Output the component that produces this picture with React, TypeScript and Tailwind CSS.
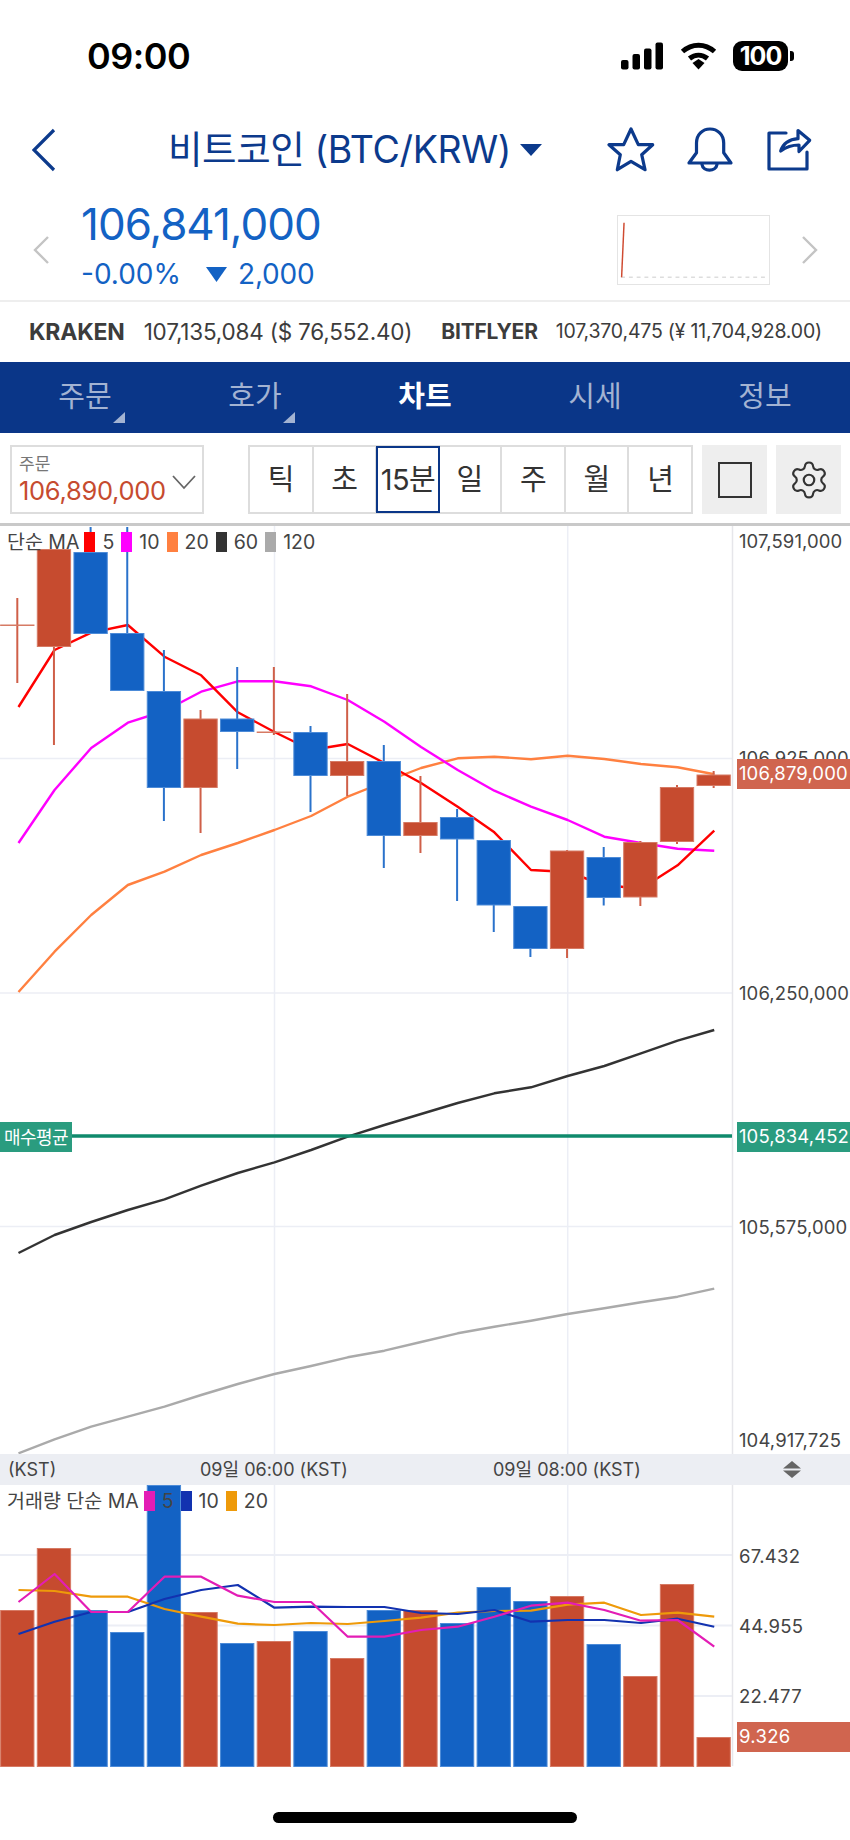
import { Settings } from "lucide-react"

const NAVY = "#0c3a8c"
const UP = "#c64b2f"
const DOWN = "#1362c4"

// Chart data is kept in page pixels: x comes from the candle index, y is read off the picture.
const cx = (i: number) => 17.3 + 36.65 * i
const lx = (i: number) => (i === 0 ? 18.5 : cx(i) + 0.6)
const line = (ys: number[]) => ys.map((y, i) => `${lx(i)},${y}`).join(" ")

type Candle = [top: number, bottom: number, wickTop: number, wickBottom: number, up: boolean]

const CANDLES: Candle[] = [
  [624.5, 625.5, 598, 683, true],
  [549, 647, 549, 745, true],
  [552, 634, 527, 634, false],
  [633, 691, 527, 691, false],
  [691, 788, 650, 821, false],
  [718.5, 788, 710, 833, true],
  [718.5, 732, 667, 769, false],
  [731.5, 732.5, 667, 735, true],
  [732, 776, 726, 812, false],
  [761, 776, 694, 796, true],
  [761, 836, 745, 868, false],
  [822, 836, 776, 853, true],
  [817, 839.5, 809, 901, false],
  [840, 905.5, 840, 932, false],
  [906, 949, 906, 957, false],
  [850.5, 949, 850, 958, true],
  [857, 898, 847, 905.5, false],
  [842, 897.5, 841, 906, true],
  [787, 842, 785, 844, true],
  [774.5, 786, 771, 788, true],
]

const MA5 = [707, 650, 632.7, 625, 656.7, 675.3, 712.3, 732, 750, 744, 763, 783, 806.7, 832.3, 870, 872, 885, 888.7, 865.3, 830.7]
const MA10 = [843, 790, 748, 722.7, 711, 691.7, 681.3, 681.3, 686.3, 700, 721.7, 747, 770, 790.7, 806.7, 820, 836.7, 843, 848.7, 850.7]
const MA20 = [992, 951.7, 915, 885, 871.7, 855, 843, 830, 816, 796.7, 782, 768, 758.3, 756.7, 759.3, 755.7, 759, 764, 767.3, 774.3]
const MA60 = [1253, 1235, 1222, 1210, 1199.3, 1185.7, 1173, 1162.3, 1150, 1136.7, 1125, 1114, 1103, 1093.3, 1087.3, 1076, 1066, 1053.3, 1040.7, 1030]
const MA120 = [1453.3, 1439.3, 1426.7, 1416.7, 1406.7, 1395, 1384, 1374, 1366, 1357.3, 1350.7, 1342, 1333.3, 1326.7, 1320.7, 1314, 1308.3, 1302.3, 1296.7, 1288.7]

const VOLUME: [number, boolean][] = [
  [1610, true], [1548, true], [1610, false], [1632, false], [1485, false],
  [1612, true], [1643, false], [1641, true], [1631, false], [1658, true],
  [1610, false], [1610, true], [1623, false], [1587, false], [1601, false],
  [1596, true], [1644, false], [1676, true], [1584, true], [1737, true],
]

const VOL5 = [1602, 1574, 1612, 1612, 1576.7, 1576.7, 1595.7, 1602, 1602, 1636.7, 1636.7, 1630, 1626.7, 1616.7, 1605.7, 1602.7, 1610, 1620.7, 1620, 1646.7]
const VOL10 = [1634, 1621.7, 1612, 1612, 1599, 1590, 1585, 1607.7, 1606.7, 1607, 1607, 1613, 1614, 1610, 1621.7, 1620, 1620, 1623, 1618.7, 1626.7]
const VOL20 = [1590, 1591, 1596.7, 1596.7, 1609, 1616.7, 1623.7, 1625, 1623, 1624, 1621, 1617.7, 1612.7, 1611, 1610.7, 1604.7, 1602.7, 1615, 1612.7, 1616.7]

const TABS = [
  { label: "주문", corner: true },
  { label: "호가", corner: true },
  { label: "차트", active: true },
  { label: "시세" },
  { label: "정보" },
]

const PERIODS = ["틱", "초", "15분", "일", "주", "월", "년"]

function StatusBar() {
  return (
    <div className="flex h-[120px] items-start">
      <span className="ml-[87px] mt-[33px] text-[36px] font-semibold leading-[46px] tracking-[-0.5px] text-black">
        09:00
      </span>
      <div className="ml-auto mr-[56px] mt-[41px] flex items-center">
        <svg width="42" height="28" viewBox="0 0 42 28" fill="#000">
          <rect x="0" y="18" width="7.5" height="9.5" rx="2" />
          <rect x="11.5" y="12" width="7.5" height="15.5" rx="2" />
          <rect x="23" y="6.5" width="7.5" height="21" rx="2" />
          <rect x="34.5" y="0.5" width="7.5" height="27" rx="2" />
        </svg>
        <svg className="ml-[17px]" width="37" height="28" viewBox="0 0 37 28">
          <g fill="none" stroke="#000" strokeWidth="5">
            <path d="M2.5 9.5C12 1 25 1 34.5 9.5" />
            <path d="M9.5 16.5C15 12 22 12 27.5 16.5" />
          </g>
          <polygon points="12.5,21 18.5,17 24.5,21 18.5,27.5" fill="#000" />
        </svg>
        <div className="ml-[16px] flex h-[30px] w-[55px] items-center justify-center rounded-[9px] bg-black text-[25px] font-bold leading-none tracking-[-1px] text-white">
          100
        </div>
        <div className="ml-[2px] h-[10px] w-[4px] rounded-r-[3px] bg-black" />
      </div>
    </div>
  )
}

function TitleRow() {
  return (
    <div className="flex h-[60px] items-center">
      <svg className="ml-[32px]" width="24" height="44" viewBox="0 0 24 44" fill="none" stroke={NAVY} strokeWidth="3.2">
        <polyline points="22,2 2,22 22,42" />
      </svg>
      <span className="ml-[112px] whitespace-nowrap text-[37.5px] leading-[50px] tracking-[-0.4px] text-[#0c3a8c]">
        비트코인 (BTC/KRW)
      </span>
      <svg className="ml-[9px]" width="22" height="12" viewBox="0 0 22 12" fill={NAVY}>
        <polygon points="0,0 22,0 11,12" />
      </svg>
      <svg className="ml-[65px]" width="48" height="46" viewBox="0 0 48 46" fill="none" stroke={NAVY} strokeWidth="3.2" strokeLinejoin="round">
        <polygon points="24,2 31.3,17.7 45.7,17.7 34.7,27.7 38,42.7 24,34.3 10.3,42.7 13.3,27.7 2,17.7 16.7,17.7" />
      </svg>
      <svg className="ml-[31px]" width="48" height="48" viewBox="-2 -2 48 48" fill="none" stroke={NAVY} strokeWidth="3.2" strokeLinejoin="round" strokeLinecap="round">
        <path d="M1 35L8.5 24.7V15C8.5 6.5 14.5 1 22 1S35.7 6.5 35.7 15V24.7L43 35Z" />
        <path d="M14 36.5C15 44 28 44 29 36.5" />
      </svg>
      <svg className="ml-[32px]" width="46" height="44" viewBox="-2 -4 46 44" fill="none" stroke={NAVY} strokeWidth="3.2" strokeLinecap="round" strokeLinejoin="round">
        <path d="M18 1H1V37H39V20" />
        <path d="M12.7 19C15 12 21 7.5 30 6.7V-1.5L41.7 8.3L31 19.5V13C23 13 18 15 12.7 19Z" />
      </svg>
    </div>
  )
}

function PriceRow() {
  return (
    <div className="flex h-[122px] items-start border-b-[2px] border-[#eeeeee]">
      <svg className="ml-[33px] mt-[56px]" width="16" height="28" viewBox="0 0 16 28" fill="none" stroke="#c4c4c4" strokeWidth="2.4">
        <polyline points="15,1 2,14 15,27" />
      </svg>
      <div className="ml-[32px] mt-[17px] flex flex-col text-[#1362c4]">
        <span className="text-[44px] leading-[54px] tracking-[-1px]">106,841,000</span>
        <div className="mt-[5px] flex items-center text-[28px] leading-[36px]">
          <span className="w-[125px]">-0.00%</span>
          <svg width="21" height="15" viewBox="0 0 21 15" fill={DOWN}>
            <polygon points="0,0 21,0 10.5,15" />
          </svg>
          <span className="ml-[11px] tracking-[-0.2px]">2,000</span>
        </div>
      </div>
      <svg className="ml-auto mt-[35px] border-[1.5px] border-[#e4e4e4]" width="153" height="70" viewBox="0 0 153 70" fill="none">
        <line x1="2" y1="63" x2="150" y2="63" stroke="#dddddd" strokeWidth="1.5" strokeDasharray="4 4" />
        <line x1="5" y1="7" x2="2.5" y2="63" stroke="#cf4a30" strokeWidth="1.5" />
      </svg>
      <svg className="ml-[32px] mr-[32px] mt-[56px]" width="16" height="28" viewBox="0 0 16 28" fill="none" stroke="#c4c4c4" strokeWidth="2.4">
        <polyline points="1,1 14,14 1,27" />
      </svg>
    </div>
  )
}

function ExchangeRow() {
  return (
    <div className="flex h-[60px] items-center whitespace-nowrap text-[#3c3c3c]">
      <span className="ml-[29px] text-[23px] font-bold tracking-[-0.2px]">KRAKEN</span>
      <span className="ml-[19px] text-[22.5px] tracking-[-0.2px]">107,135,084 ($ 76,552.40)</span>
      <span className="ml-[29px] text-[21px] font-bold tracking-[-0.2px]">BITFLYER</span>
      <span className="ml-[18px] text-[19.5px] tracking-[-0.2px]">107,370,475 (¥ 11,704,928.00)</span>
    </div>
  )
}

function TabBar() {
  return (
    <div className="flex h-[71px] bg-[#0a3688]">
      {TABS.map((t) => (
        <div key={t.label} className="relative flex flex-1 items-center justify-center pb-[1px]">
          <span className={`text-[29px] ${t.active ? "font-bold text-white" : "text-[#a3b3d2]"}`}>{t.label}</span>
          {t.corner ? (
            <svg className="absolute bottom-[10px] left-[113px]" width="12" height="11" viewBox="0 0 12 11" fill="#a3b3d2">
              <polygon points="12,0 12,11 0,11" />
            </svg>
          ) : null}
        </div>
      ))}
    </div>
  )
}

function Toolbar() {
  return (
    <div className="flex h-[93px] items-start border-b-[3px] border-[#c9c9c9] pl-[10px] pt-[12px]">
      <div className="flex h-[69px] w-[194px] items-center border-[2.5px] border-[#dddddd] pl-[7px]">
        <div className="flex flex-col">
          <span className="text-[17px] leading-[20px] text-[#777777]">주문</span>
          <span className="mt-[3px] text-[25.5px] leading-[28px] tracking-[-0.3px] text-[#c64b2f]">106,890,000</span>
        </div>
        <svg className="ml-[6px] mt-[5px]" width="24" height="15" viewBox="0 0 24 15" fill="none" stroke="#666666" strokeWidth="1.8">
          <polyline points="1,1 12,13 23,1" />
        </svg>
      </div>
      <div className="ml-[44px] flex h-[69px] w-[445px] border-[2.5px] border-[#dddddd]">
        {PERIODS.map((p, i) => (
          <div
            key={p}
            className={`flex flex-1 items-center justify-center text-[29px] tracking-[-0.5px] text-[#333333] ${
              p === "15분" ? "outline-2 -outline-offset-1 outline-[#0a3688]" : i < 6 ? "border-r-[2px] border-[#dddddd]" : ""
            }`}
          >
            {p}
          </div>
        ))}
      </div>
      <div className="ml-[9px] flex h-[69px] w-[65px] items-center justify-center bg-[#eeeeee]">
        <div className="h-[36px] w-[34px] border-[2px] border-[#333333]" />
      </div>
      <div className="ml-[9px] flex h-[69px] w-[65px] items-center justify-center bg-[#eeeeee]">
        <Settings size={42} strokeWidth={1.25} color="#333333" />
      </div>
    </div>
  )
}

function LegendSwatch({ className, label }: { className: string; label: string }) {
  return (
    <>
      <span className={`h-[20px] w-[11px] ${className}`} />
      <span className="mx-[7px]">{label}</span>
    </>
  )
}

// Bars and candle bodies carry a faint lighter edge in the picture.
function Body({ x, y, height, up }: { x: number; y: number; height: number; up: boolean }) {
  return (
    <rect
      x={x - 16.65}
      y={y + 0.5}
      width="33.3"
      height={Math.max(height - 1, 0.5)}
      fill={up ? UP : DOWN}
      stroke={up ? "#d67a64" : "#4c8bd8"}
      strokeWidth="1"
    />
  )
}

function PriceChart() {
  return (
    <div className="relative h-[928px] overflow-hidden">
      <svg className="block" width="850" height="928" viewBox="0 526 850 928" fill="none">
        <g stroke="#eceef5" strokeWidth="1.5">
          <line x1="0" y1="758.5" x2="732" y2="758.5" />
          <line x1="0" y1="993" x2="732" y2="993" />
          <line x1="0" y1="1226.5" x2="732" y2="1226.5" />
          <line x1="274.5" y1="526" x2="274.5" y2="1454" />
          <line x1="567.7" y1="526" x2="567.7" y2="1454" />
        </g>
        <line x1="732.5" y1="526" x2="732.5" y2="1454" stroke="#e6e6ea" strokeWidth="1.5" />
        <g strokeWidth="2.4" strokeLinejoin="round">
          <polyline points={line(MA120)} stroke="#aaaaaa" />
          <polyline points={line(MA60)} stroke="#333333" />
          <polyline points={line(MA20)} stroke="#ff8040" />
          <polyline points={line(MA10)} stroke="#ff00ff" />
          <polyline points={line(MA5)} stroke="#ff0000" />
        </g>
        <line x1="0" y1="1136" x2="732" y2="1136" stroke="#0f8a6c" strokeWidth="3.4" />
        {CANDLES.map(([top, bottom, wickTop, wickBottom, up], i) => (
          <g key={i}>
            <line x1={cx(i)} y1={wickTop} x2={cx(i)} y2={wickBottom} stroke={up ? "#cf5f48" : "#2a72cb"} strokeWidth="2" />
            <Body x={cx(i)} y={top} height={bottom - top} up={up} />
          </g>
        ))}
      </svg>
      <div className="absolute left-[7px] top-[4px] flex items-center text-[19.5px] leading-[24px] text-[#444444]">
        <span className="mr-[5px]">단순 MA</span>
        <LegendSwatch className="bg-[#ff0000]" label="5" />
        <LegendSwatch className="bg-[#ff00ff]" label="10" />
        <LegendSwatch className="bg-[#ff8040]" label="20" />
        <LegendSwatch className="bg-[#333333]" label="60" />
        <LegendSwatch className="bg-[#aaaaaa]" label="120" />
      </div>
      <div className="absolute left-0 top-[596px] flex h-[30px] w-[72px] items-center justify-center bg-[#2a9c7f] text-[18px] tracking-[-0.6px] text-white">
        매수평균
      </div>
      <div className="absolute left-[739px] top-[3px] text-[18.5px] leading-[24px] tracking-[0.1px] text-[#444444]">107,591,000</div>
      <div className="absolute left-[739px] top-[220px] text-[18.5px] leading-[24px] tracking-[0.1px] text-[#444444]">106,925,000</div>
      <div className="absolute left-[737px] top-[233px] flex h-[30px] w-[113px] items-center bg-[#d0654f] pl-[2px] text-[18.5px] tracking-[0.1px] text-white">106,879,000</div>
      <div className="absolute left-[739px] top-[455px] text-[18.5px] leading-[24px] tracking-[0.1px] text-[#444444]">106,250,000</div>
      <div className="absolute left-[737px] top-[596px] flex h-[30px] w-[113px] items-center bg-[#2a9c7f] pl-[2px] text-[18.5px] tracking-[0.1px] text-white">105,834,452</div>
      <div className="absolute left-[739px] top-[689px] text-[18.5px] leading-[24px] tracking-[0.1px] text-[#444444]">105,575,000</div>
      <div className="absolute left-[739px] top-[902px] text-[18.5px] leading-[24px] tracking-[0.1px] text-[#444444]">104,917,725</div>
    </div>
  )
}

function TimeAxis() {
  return (
    <div className="relative h-[31px] bg-[#eceef3] text-[18px] leading-[31px] text-[#444444]">
      <span className="absolute left-[8px]">(KST)</span>
      <span className="absolute left-[200px]">09일 06:00 (KST)</span>
      <span className="absolute left-[493px]">09일 08:00 (KST)</span>
      <svg className="absolute left-[783px] top-[7px]" width="18" height="17" viewBox="0 0 18 17" fill="#666666">
        <polygon points="9,0 18,7.5 0,7.5" />
        <polygon points="0,9.5 18,9.5 9,17" />
      </svg>
    </div>
  )
}

function VolumeChart() {
  return (
    <div className="relative h-[282px] overflow-hidden">
      <svg className="block" width="850" height="282" viewBox="0 1485 850 282" fill="none">
        <g stroke="#eceef5" strokeWidth="2">
          <line x1="0" y1="1555" x2="732" y2="1555" />
          <line x1="0" y1="1625.5" x2="732" y2="1625.5" />
          <line x1="0" y1="1696" x2="732" y2="1696" />
        </g>
        <g stroke="#eceef5" strokeWidth="1.5">
          <line x1="274.5" y1="1485" x2="274.5" y2="1766" />
          <line x1="567.7" y1="1485" x2="567.7" y2="1766" />
        </g>
        <line x1="732.5" y1="1485" x2="732.5" y2="1766" stroke="#e6e6ea" strokeWidth="1.5" />
        {VOLUME.map(([top, up], i) => (
          <Body key={i} x={cx(i)} y={top} height={1767 - top} up={up} />
        ))}
        <g strokeWidth="2.2" strokeLinejoin="round">
          <polyline points={line(VOL20)} stroke="#ee9a0a" />
          <polyline points={line(VOL10)} stroke="#1232b0" />
          <polyline points={line(VOL5)} stroke="#e31db5" />
        </g>
      </svg>
      <div className="absolute left-[7px] top-[4px] flex items-center text-[19.5px] leading-[24px] text-[#444444]">
        <span className="mr-[5px]">거래량 단순 MA</span>
        <LegendSwatch className="bg-[#e31db5]" label="5" />
        <LegendSwatch className="bg-[#1232b0]" label="10" />
        <LegendSwatch className="bg-[#ee9a0a]" label="20" />
      </div>
      <div className="absolute left-[739px] top-[59px] text-[18.5px] leading-[24px] tracking-[0.3px] text-[#444444]">67.432</div>
      <div className="absolute left-[739px] top-[129px] text-[18.5px] leading-[24px] tracking-[0.3px] text-[#444444]">44.955</div>
      <div className="absolute left-[739px] top-[199px] text-[18.5px] leading-[24px] tracking-[0.3px] text-[#444444]">22.477</div>
      <div className="absolute left-[737px] top-[237px] flex h-[30px] w-[113px] items-center bg-[#d0654f] pl-[2px] text-[18.5px] tracking-[0.3px] text-white">9.326</div>
    </div>
  )
}

export default function App() {
  return (
    <div className="flex h-[1840px] w-[850px] flex-col overflow-hidden bg-white font-['Inter','Noto_Sans_CJK_KR',sans-serif]">
      <StatusBar />
      <TitleRow />
      <PriceRow />
      <ExchangeRow />
      <TabBar />
      <Toolbar />
      <PriceChart />
      <TimeAxis />
      <VolumeChart />
      <div className="flex flex-1 justify-center pt-[45px]">
        <div className="h-[11px] w-[304px] rounded-full bg-black" />
      </div>
    </div>
  )
}
